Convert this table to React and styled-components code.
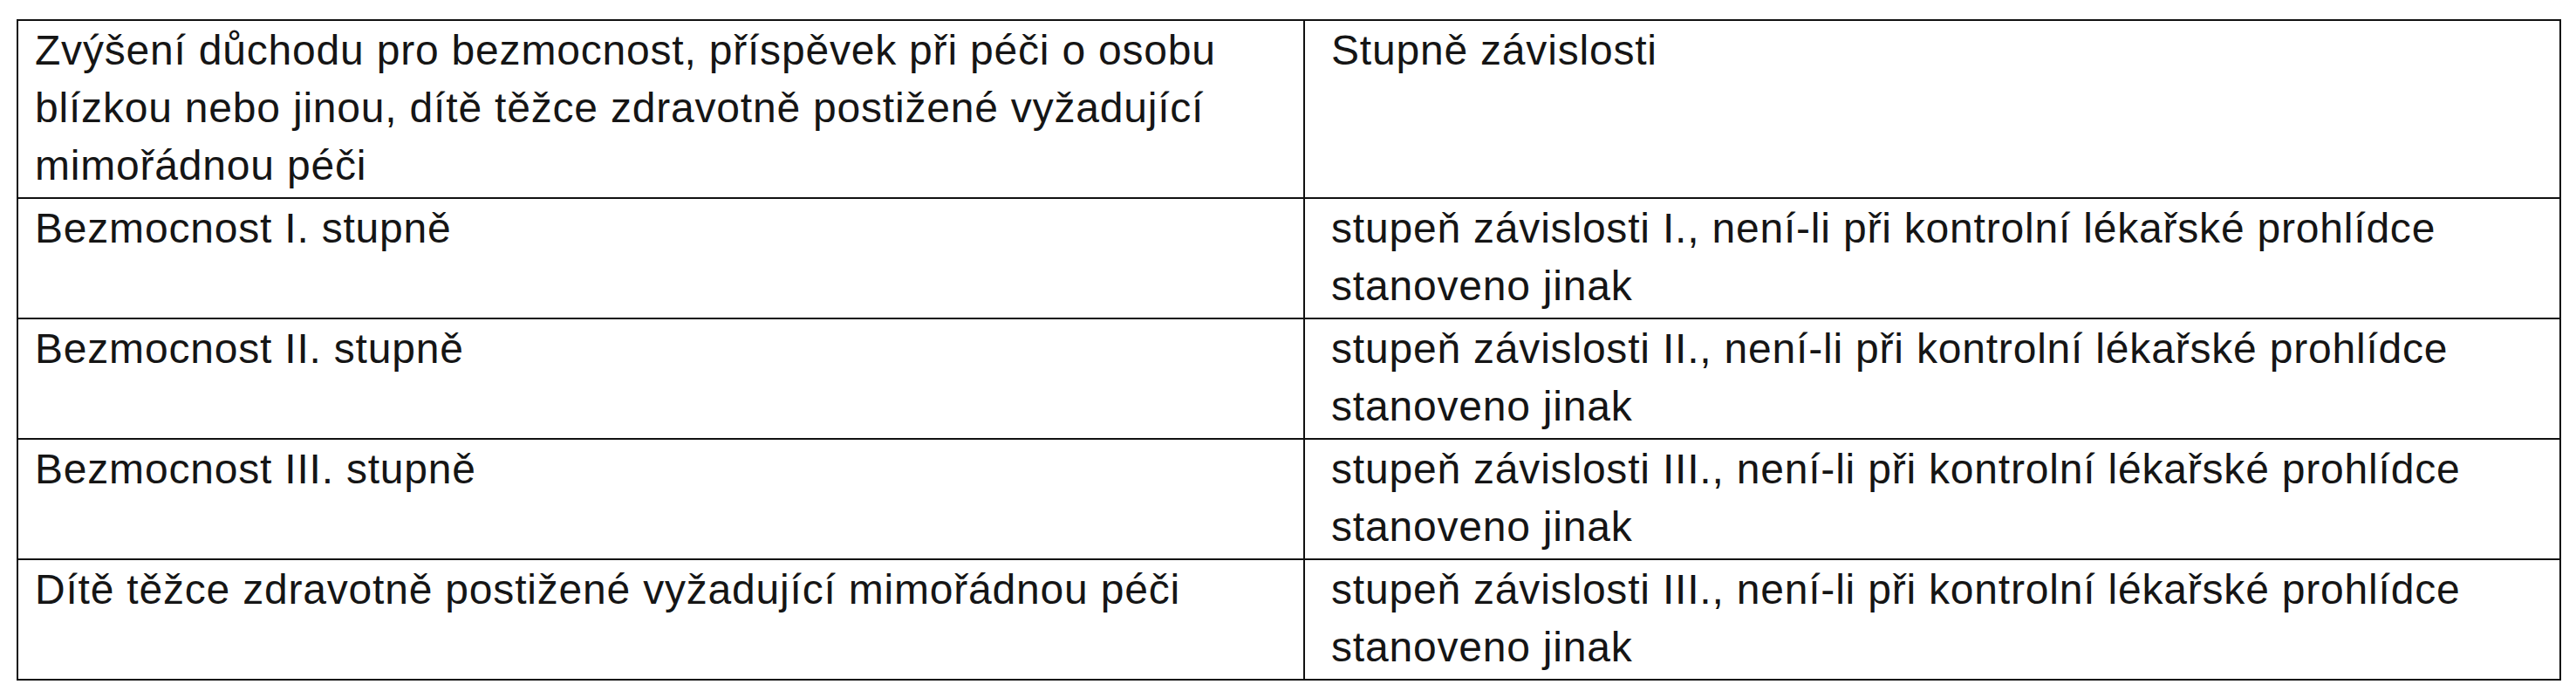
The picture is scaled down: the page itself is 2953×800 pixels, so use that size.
import React from "react"
import styled, { createGlobalStyle } from "styled-components"

const GlobalStyle = createGlobalStyle`
  html, body {
    margin: 0;
    padding: 0;
    background: #fff;
  }
  body {
    font-family: "Liberation Sans", Arial, sans-serif;
    color: #111;
  }
`

const rows = [
  ["Bezmocnost I. stupně", "stupeň závislosti I., není-li při kontrolní lékařské prohlídce stanoveno jinak"],
  ["Bezmocnost II. stupně", "stupeň závislosti II., není-li při kontrolní lékařské prohlídce stanoveno jinak"],
  ["Bezmocnost III. stupně", "stupeň závislosti III., není-li při kontrolní lékařské prohlídce stanoveno jinak"],
  ["Dítě těžce zdravotně postižené vyžadující mimořádnou péči", "stupeň závislosti III., není-li při kontrolní lékařské prohlídce stanoveno jinak"],
]

const App = () => {
  return (
    <>
      <GlobalStyle />
      <Page>
        <Table>
          <colgroup>
            <col style={{ width: "1475px" }} />
            <col />
          </colgroup>
          <tbody>
            <tr>
              <Cell>
                Zvýšení důchodu pro bezmocnost, příspěvek při péči o osobu blízkou nebo jinou, dítě těžce zdravotně
                postižené vyžadující mimořádnou péči
              </Cell>
              <Cell $second>Stupně závislosti</Cell>
            </tr>
            {rows.map(([left, right]) => (
              <tr key={left}>
                <Cell>{left}</Cell>
                <Cell $second>{right}</Cell>
              </tr>
            ))}
          </tbody>
        </Table>
      </Page>
    </>
  )
}

export default App

const Page = styled.div`
  padding: 22px 0 0 19px;
  width: 2953px;
  box-sizing: border-box;
`

const Table = styled.table`
  width: 2917px;
  table-layout: fixed;
  border-collapse: collapse;
  border: 2px solid #111;
`

const Cell = styled.td`
  border: 2px solid #111;
  vertical-align: top;
  padding: 1px 20px 3px ${(p) => (p.$second ? "30px" : "19px")};
  font-size: 48px;
  line-height: 66px;
  letter-spacing: 0.8px;
  color: #151515;
`
